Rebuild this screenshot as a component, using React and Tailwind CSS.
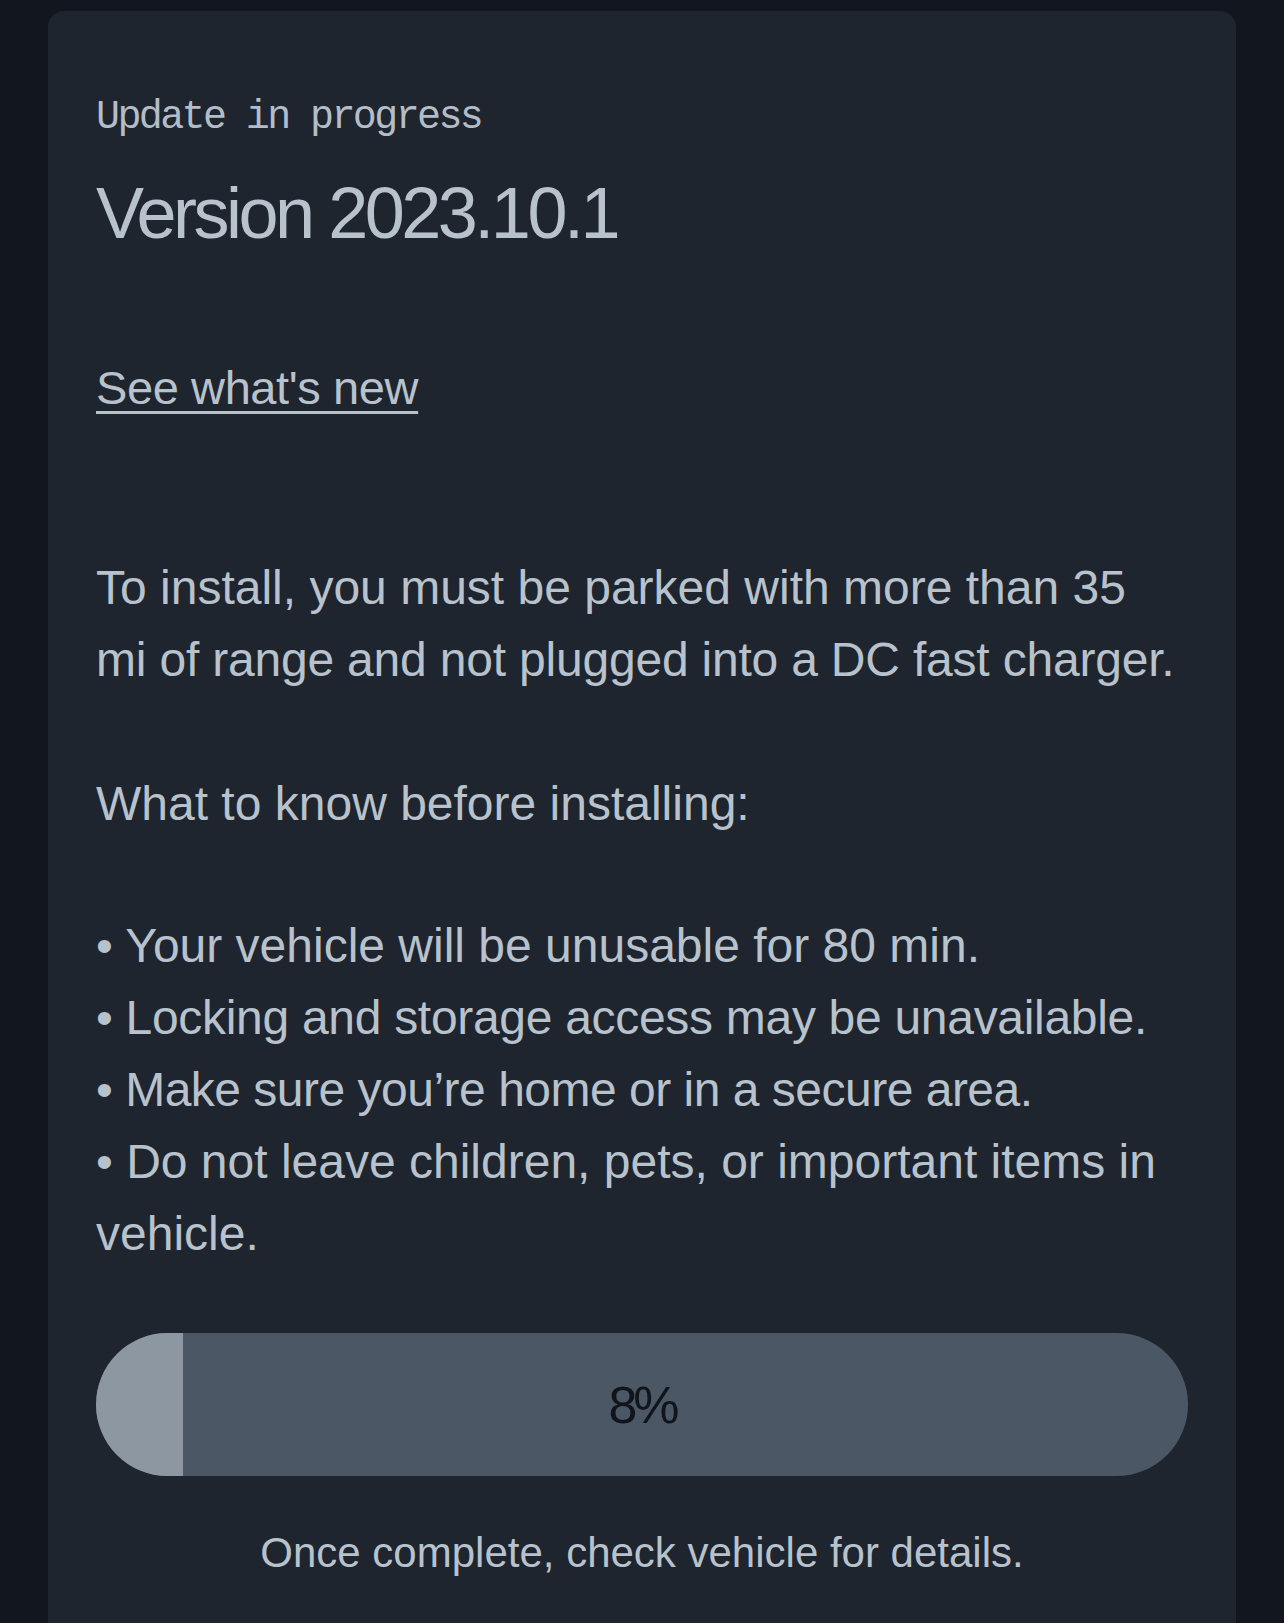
export default function App() {
  const percent = 8;

  return (
    <div className="min-h-[1623px] bg-[#12161e] px-12 pt-[11px] font-['Liberation_Sans',Arial,sans-serif] text-[#b8c2cc]">
      <div className="rounded-2xl bg-[#1f252e] px-12 pt-[83px] pb-24">
        <p className="font-['Liberation_Mono',monospace] text-[40px] leading-[48px] tracking-[-2.6px] text-[#b3bdc8]">
          Update in progress
        </p>
        <h1 className="mt-[35px] text-[72px] leading-[72px] tracking-[-3.5px]">Version 2023.10.1</h1>

        <a
          href="#"
          className="mt-[104px] block w-fit text-[47px] leading-[69px] tracking-[-0.4px] underline decoration-[3px] underline-offset-[7px]"
        >
          See what's new
        </a>

        <div className="mt-[130px] text-[48px] leading-[72px] whitespace-nowrap">
          <p>To install, you must be parked with more than 35</p>
          <p className="tracking-[-0.2px]">mi of range and not plugged into a DC fast charger.</p>
          <p className="mt-[72px]">What to know before installing:</p>
          <ul className="mt-[70px]">
            <li>• Your vehicle will be unusable for 80 min.</li>
            <li className="tracking-[-0.3px]">• Locking and storage access may be unavailable.</li>
            <li className="tracking-[-0.5px]">• Make sure you’re home or in a secure area.</li>
            <li>• Do not leave children, pets, or important items in</li>
            <li>vehicle.</li>
          </ul>
        </div>

        <div className="relative mt-[63px] h-[143px] overflow-hidden rounded-full bg-[#4b5765]">
          <div className="h-full bg-[#8c97a2]" style={{ width: `${percent}%` }} />
          <div className="absolute inset-0 flex items-center justify-center text-[52px] tracking-[-4px] text-[#11151b]">
            {percent}%
          </div>
        </div>

        <p className="mt-[45px] text-center text-[42px] leading-[63px]">
          Once complete, check vehicle for details.
        </p>
      </div>
    </div>
  );
}
